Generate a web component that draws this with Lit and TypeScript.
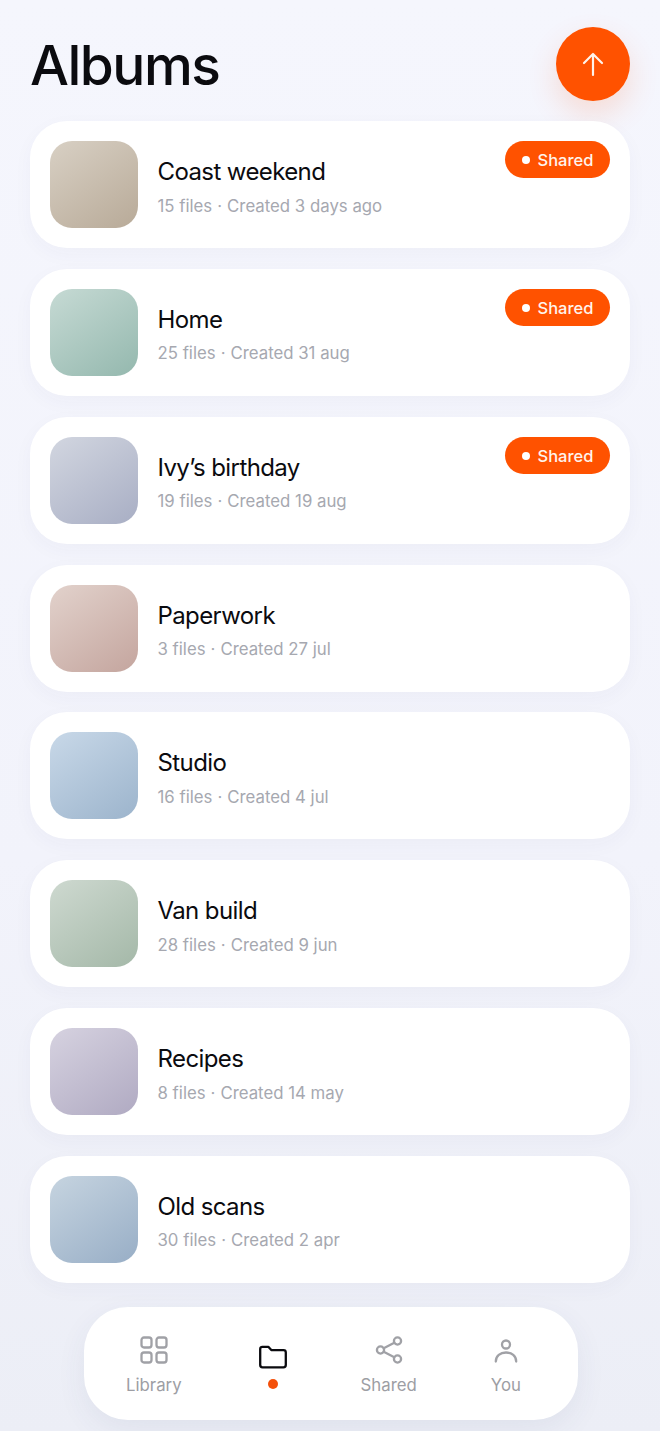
import { LitElement, html, css, svg } from "lit";
import { customElement } from "lit/decorators.js";

const albums = [
  { name: "Coast weekend", files: "15 files", date: "Created 3 days ago", a: "#d8d0c4", b: "#b8aa98", shared: true },
  { name: "Home", files: "25 files", date: "Created 31 aug", a: "#c6dad4", b: "#94b8ae", shared: true },
  { name: "Ivy’s birthday", files: "19 files", date: "Created 19 aug", a: "#d2d6e0", b: "#a8aec4", shared: true },
  { name: "Paperwork", files: "3 files", date: "Created 27 jul", a: "#e2d2cc", b: "#c4a59e", shared: false },
  { name: "Studio", files: "16 files", date: "Created 4 jul", a: "#c8d8e8", b: "#9cb4cc", shared: false },
  { name: "Van build", files: "28 files", date: "Created 9 jun", a: "#ced9d0", b: "#a4b8a8", shared: false },
  { name: "Recipes", files: "8 files", date: "Created 14 may", a: "#d6d2e0", b: "#b0aac2", shared: false },
  { name: "Old scans", files: "30 files", date: "Created 2 apr", a: "#c6d4e0", b: "#98aec6", shared: false },
];

@customElement("app-root")
export class AppRoot extends LitElement {
  static styles = css`
    :host {
      display: block;
      width: 660px;
      height: 1431px;
      overflow: hidden;
      box-sizing: border-box;
      padding: 27px 30px 0;
      background: linear-gradient(180deg, #f5f6fd 0%, #f2f3fb 60%, #eceef6 100%);
      font-family: "Inter", "Liberation Sans", sans-serif;
    }
    .head {
      display: flex;
      justify-content: space-between;
      align-items: center;
      height: 74px;
      margin-bottom: 20px;
    }
    h1 {
      margin: 0;
      font-size: 55px;
      font-weight: 500;
      letter-spacing: -1.5px;
      color: #0b0b0f;
      line-height: 76px;
      padding-top: 2px;
    }
    .fab {
      width: 74px;
      height: 74px;
      border-radius: 50%;
      background: #ff5200;
      box-shadow: 0 13px 30px rgba(255, 82, 0, 0.16);
      display: flex;
      align-items: center;
      justify-content: center;
    }
    .list {
      display: flex;
      flex-direction: column;
      gap: 20.85px;
    }
    .card {
      position: relative;
      height: 127px;
      box-sizing: border-box;
      padding: 20px;
      background: #fff;
      border-radius: 37px;
      display: flex;
      align-items: center;
      gap: 20px;
      box-shadow: 0 6px 20px rgba(60, 70, 110, 0.035);
    }
    .thumb {
      width: 88px;
      height: 87px;
      border-radius: 22px;
      flex: none;
    }
    .text {
      display: flex;
      flex-direction: column;
      gap: 7.5px;
      padding-top: 4.5px;
      margin-left: -0.5px;
    }
    .name {
      font-size: 24px;
      font-weight: 400;
      letter-spacing: -0.6px;
      color: #0b0b0f;
      line-height: 30px;
    }
    .meta {
      font-size: 16.8px;
      color: #a6a8b0;
      line-height: 22px;
      display: flex;
    }
    .sep {
      margin: 0 5px;
    }
    .badge {
      position: absolute;
      top: 20px;
      right: 20px;
      width: 105px;
      height: 37px;
      box-sizing: border-box;
      padding-top: 1px;
      border-radius: 19px;
      background: #ff5200;
      color: #fff4ec;
      font-size: 16.5px;
      font-weight: 500;
      display: flex;
      align-items: center;
      justify-content: center;
      gap: 8px;
    }
    .badge i {
      width: 8px;
      height: 8px;
      border-radius: 50%;
      background: #fff;
    }
    .nav {
      width: 494px;
      height: 113px;
      box-sizing: border-box;
      margin: 24px 0 0 54px;
      padding: 29px 0 0 42px;
      border-radius: 44px;
      background: #fff;
      box-shadow: 0 10px 30px rgba(60, 70, 110, 0.07);
      display: flex;
      justify-content: flex-start;
      align-items: flex-start;
      gap: 74px;
    }
    .item {
      display: flex;
      flex-direction: column;
      align-items: center;
      gap: 10px;
      color: #9d9ea4;
      font-size: 16.8px;
      line-height: 22px;
    }
    .item svg {
      display: block;
    }
    .dot {
      width: 10px;
      height: 10px;
      border-radius: 50%;
      background: #f4500a;
    }
    .active {
      gap: 7px;
      padding-top: 8px;
      margin-left: 3px;
    }
  `;

  private icon(body: unknown, color = "#a0a1a6") {
    return html`<svg width="28" height="28" viewBox="0 0 28 28" fill="none" stroke=${color} stroke-width="2.3" stroke-linecap="round" stroke-linejoin="round">${body}</svg>`;
  }

  render() {
    return html`
      <div class="head">
        <h1>Albums</h1>
        <div class="fab">
          <svg width="30" height="30" viewBox="0 0 30 30" fill="none" stroke="#fff3ea" stroke-width="2.2" stroke-linecap="round" stroke-linejoin="round">
            <path d="M15 26V5M6 14l9-9 9 9" />
          </svg>
        </div>
      </div>
      <div class="list">
        ${albums.map(
          (a) => html`<div class="card">
            <div class="thumb" style="background:linear-gradient(145deg,${a.a},${a.b})"></div>
            <div class="text">
              <div class="name">${a.name}</div>
              <div class="meta"><span>${a.files}</span><span class="sep">·</span><span>${a.date}</span></div>
            </div>
            ${a.shared ? html`<div class="badge"><i></i>Shared</div>` : ""}
          </div>`
        )}
      </div>
      <div class="nav">
        <div class="item">
          ${this.icon(svg`<rect x="1.500" y="1.500" width="10" height="10" rx="2.500"/><rect x="16.500" y="1.500" width="10" height="10" rx="2.500"/><rect x="1.500" y="16.500" width="10" height="10" rx="2.500"/><rect x="16.500" y="16.500" width="10" height="10" rx="2.500"/>`)}
          <span>Library</span>
        </div>
        <div class="item active">
          ${this.icon(svg`<path d="M1.200 4.900c0-1.200.9-2.100 2.100-2.100h6l3 3.300h12.200c1.300 0 2.300 1 2.300 2.300v12.700c0 1.300-1 2.300-2.300 2.300H3.500c-1.300 0-2.300-1-2.300-2.300z"/>`, "#0b0b0f")}
          <span class="dot"></span>
        </div>
        <div class="item">
          ${this.icon(svg`<circle cx="22.500" cy="5" r="3.600"/><circle cx="5.500" cy="14" r="3.600"/><circle cx="22.500" cy="23" r="3.600"/><path d="M8.700 12.300 19.300 6.700M8.700 15.700l10.600 5.600"/>`)}
          <span>Shared</span>
        </div>
        <div class="item">
          ${this.icon(svg`<circle cx="14" cy="8.500" r="4"/><path d="M3.800 25.500c0-5.500 4.500-9 10.200-9s10.200 3.500 10.200 9"/>`)}
          <span>You</span>
        </div>
      </div>
    `;
  }
}
